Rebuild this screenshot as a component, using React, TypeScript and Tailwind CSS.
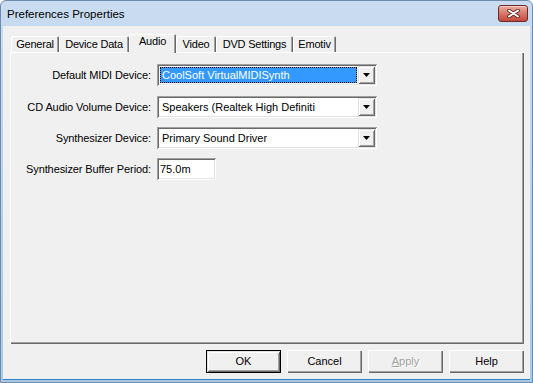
import React from 'react'

const FONT = "font-['Liberation_Sans',Arial,sans-serif]"

const TABS = [
  { label: 'General',      w: 'w-[48px]' },
  { label: 'Device Data',  w: 'w-[70px]' },
  { label: 'Audio',        w: 'w-[47px]', active: true },
  { label: 'Video',        w: 'w-[40px]' },
  { label: 'DVD Settings', w: 'w-[77px]' },
  { label: 'Emotiv',       w: 'w-[43px]' },
]

const SUNKEN = 'shadow-[inset_1px_1px_#a0a0a0,inset_-1px_-1px_#ffffff,inset_2px_2px_#696969,inset_-2px_-2px_#e3e3e3]'
const RAISED = 'shadow-[inset_1px_1px_#e3e3e3,inset_-1px_-1px_#696969,inset_2px_2px_#ffffff,inset_-2px_-2px_#a0a0a0]'

function Arrow() {
  return (
    <svg width="7" height="4" viewBox="0 0 7 4" className="block">
      <polygon points="0,0 7,0 3.5,4" fill="#000" />
    </svg>
  )
}

function Combo({ value, selected }: { value: string; selected?: boolean }) {
  return (
    <div className={`w-[220px] h-[22px] bg-white p-[2px] flex ${SUNKEN}`}>
      <div className="flex-1 min-w-0 p-[1px]">
        <div
          className={`h-full flex items-center pl-[2px] whitespace-nowrap overflow-hidden
            ${selected ? 'bg-[#3399ff] text-white outline outline-1 outline-dotted outline-[#000] -outline-offset-1' : 'text-black'}`}
        >{value}</div>
      </div>
      <div className={`w-[17px] h-full bg-[#f0f0f0] flex items-center justify-center ${RAISED}`}>
        <Arrow />
      </div>
    </div>
  )
}

function Row({ label, className, children }: { label: string; className?: string; children: React.ReactNode }) {
  return (
    <div className={`flex items-center ${className ?? ''}`}>
      <div className="w-[142px] text-right pr-[1px] tracking-[-0.1px]">{label}</div>
      <div className="ml-[5px]">{children}</div>
    </div>
  )
}

function Button({ label, isDefault, disabled }: { label: React.ReactNode; isDefault?: boolean; disabled?: boolean }) {
  if (isDefault) {
    return (
      <div className="w-[75px] h-[23px] border border-black">
        <div className={`w-full h-full bg-[#f0f0f0] flex items-center justify-center ${RAISED}`}>{label}</div>
      </div>
    )
  }
  return (
    <div
      className={`w-[75px] h-[23px] bg-[#f0f0f0] flex items-center justify-center
        shadow-[inset_1px_1px_#ffffff,inset_-1px_-1px_#696969,inset_-2px_-2px_#a0a0a0]
        ${disabled ? 'text-[#a0a0a0] [text-shadow:1px_1px_#ffffff]' : 'text-black'}`}
    >{label}</div>
  )
}

function CloseButton() {
  return (
    <div className="w-[30px] h-[17px] rounded-[3px] border border-[#6e2a22] bg-gradient-to-b from-[#e9ada1] via-[#d6786a] to-[#c2473a] flex items-center justify-center shadow-[inset_0_1px_#f4cfc7]">
      <svg width="13" height="9" viewBox="0 0 13 9">
        <path d="M2 1.5 L11 7.5 M11 1.5 L2 7.5" stroke="#5a1f18" strokeWidth="3.6" strokeLinecap="round" />
        <path d="M2 1.5 L11 7.5 M11 1.5 L2 7.5" stroke="#ffffff" strokeWidth="2" strokeLinecap="round" />
      </svg>
    </div>
  )
}

export default function App() {
  return (
    <div className={`w-[533px] h-[383px] bg-white text-[11px] text-black ${FONT}`}>
      <div className="w-full h-full flex flex-col rounded-t-[6px] border border-[#6d8bad] bg-gradient-to-b from-[#c9dcf1] via-[#bad2eb] to-[#a9c8e8]">
        {/* title bar */}
        <div className="h-[25px] flex items-start pl-[6px] pr-[4px] pt-[4px] shrink-0">
          <div className="flex-1 text-[11.5px] leading-[16px] pt-[1px]">Preferences Properties</div>
          <CloseButton />
        </div>

        {/* client area */}
        <div className="flex-1 mx-[2px] mb-[2px] bg-[#f0f0f0] pl-[7px] pr-[6px] pt-[8px] flex flex-col border-b border-[#2f86c4]">
          <div className="h-[18px] flex items-end relative z-10 shrink-0">
            {TABS.map((t, i) => (
              <div
                key={t.label}
                className={`${t.w} ${i === 0 ? 'ml-[1px]' : ''} rounded-t-[2px] bg-[#f0f0f0] flex items-center justify-center tracking-[-0.2px]
                  shadow-[inset_1px_1px_#ffffff,inset_-1px_0_#696969,inset_-2px_0_#a0a0a0]
                  ${t.active ? 'h-[19px] -mb-[1px] pb-[4px]' : 'h-[16px]'}`}
              >{t.label}</div>
            ))}
          </div>

          <div className="h-[292px] shrink-0 pt-[12px] shadow-[inset_1px_1px_#ffffff,inset_-1px_-1px_#696969,inset_-2px_-2px_#a0a0a0]">
            <Row label="Default MIDI Device:">
              <Combo value="CoolSoft VirtualMIDISynth" selected />
            </Row>
            <Row label="CD Audio Volume Device:" className="mt-[10px]">
              <Combo value="Speakers (Realtek High Definiti" />
            </Row>
            <Row label="Synthesizer Device:" className="mt-[9px]">
              <Combo value="Primary Sound Driver" />
            </Row>
            <Row label="Synthesizer Buffer Period:" className="mt-[9px]">
              <div className={`w-[59px] h-[22px] bg-white pl-[3px] flex items-center ${SUNKEN}`}>75.0m</div>
            </Row>
          </div>

          <div className="flex justify-end gap-[6px] mt-[6px]">
            <Button label="OK" isDefault />
            <Button label="Cancel" />
            <Button label={<span><span className="underline">A</span>pply</span>} disabled />
            <Button label="Help" />
          </div>
        </div>
      </div>
    </div>
  )
}
